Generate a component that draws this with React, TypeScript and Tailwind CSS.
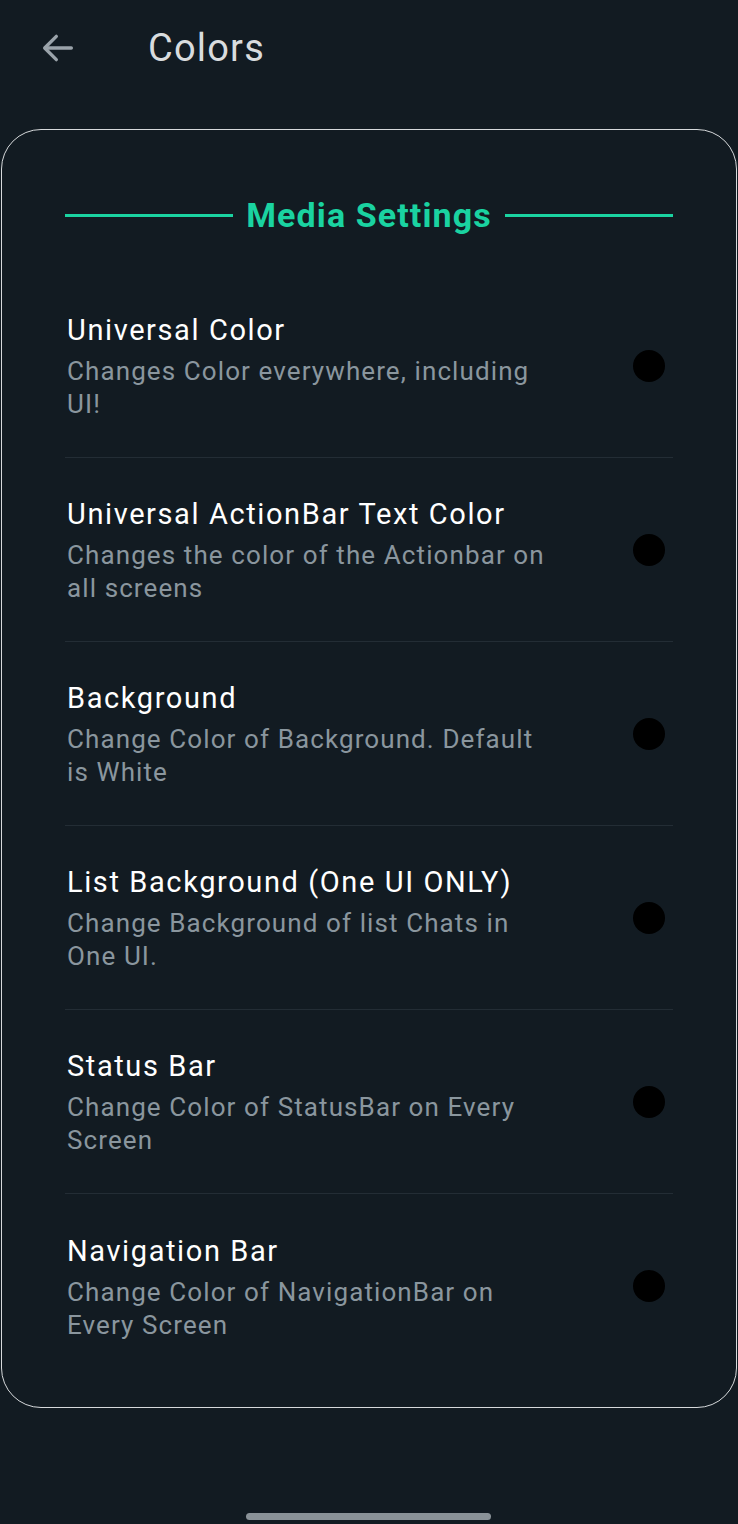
const items = [
  { title: 'Universal Color', desc: 'Changes Color everywhere, including UI!' },
  { title: 'Universal ActionBar Text Color', desc: 'Changes the color of the Actionbar on all screens' },
  { title: 'Background', desc: 'Change Color of Background. Default is White' },
  { title: 'List Background (One UI ONLY)', desc: 'Change Background of list Chats in One UI.' },
  { title: 'Status Bar', desc: 'Change Color of StatusBar on Every Screen' },
  { title: 'Navigation Bar', desc: 'Change Color of NavigationBar on Every Screen' },
];

function App() {
  return (
    <div className="min-h-[1524px] w-full bg-[#121b22] flex flex-col font-['Roboto',sans-serif] relative">
      {/* top bar */}
      <div className="h-[98px] flex items-center pb-[2px]">
        <div className="w-[148px] flex items-center pl-[38px]">
          <svg width="40" height="40" viewBox="0 0 24 24" fill="none" stroke="#9aa3aa" strokeWidth="2" strokeLinecap="round" strokeLinejoin="round">
            <path d="M20 12H4.5" />
            <path d="M11 5l-7 7 7 7" />
          </svg>
        </div>
        <h1 className="text-[38px] tracking-[1.2px] text-[#d9dcde] leading-none">Colors</h1>
      </div>

      <div className="mt-[31px] mx-[1px] border-[1.5px] border-[#d6d9db] rounded-[40px] bg-[#121b22] pt-[68px] pb-[29px] px-[63px]">
        <div className="flex items-center gap-[13px] pb-[42px]">
          <div className="flex-1 h-[3px] bg-[#1ad3a1]" />
          <span className="text-[34px] tracking-[1.1px] font-bold text-[#1ad3a1] leading-none">Media Settings</span>
          <div className="flex-1 h-[3px] bg-[#1ad3a1]" />
        </div>

        <div className="flex flex-col">
          {items.map((it, i) => (
            <div
              key={it.title}
              className={
                'flex items-center h-[184px] pl-[2px] pr-[8px] ' +
                (i < items.length - 1 ? 'border-b border-[#232d35]' : '')
              }
            >
              <div className="flex-1 pr-[20px] pt-[2px]">
                <div className="text-[29px] tracking-[1.6px] text-white leading-[36px]">{it.title}</div>
                <div className="w-[490px] mt-[7px] text-[26px] tracking-[1.1px] text-[#8a969e] leading-[33px]">{it.desc}</div>
              </div>
              <div className="w-[32px] h-[32px] rounded-full bg-black" />
            </div>
          ))}
        </div>
      </div>

      <div className="absolute left-[246px] top-[1513px] w-[245px] h-[7px] rounded-full bg-[#8a9298]" />
    </div>
  );
}

export default App;
